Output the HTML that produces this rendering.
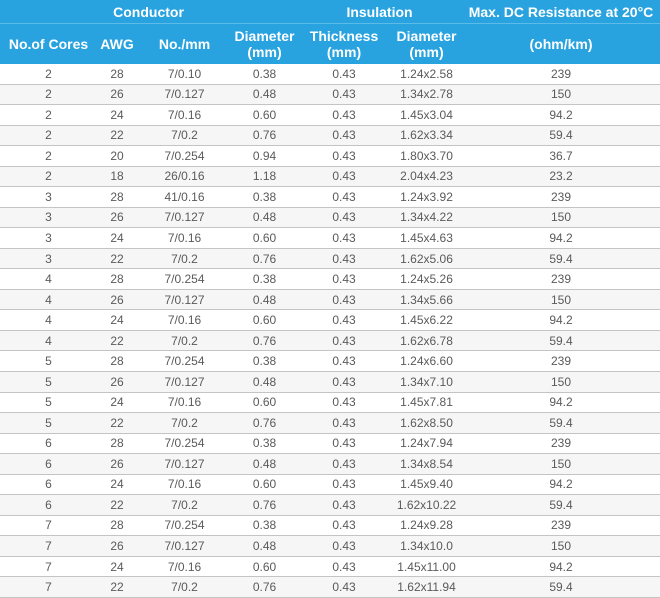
<!DOCTYPE html>
<html><head><meta charset="utf-8"><style>
body{margin:0;background:#fff;}
table{border-collapse:collapse;width:660px;table-layout:fixed;font-family:"Liberation Sans",sans-serif;}
th{background:#29a3e0;color:#fff;font-weight:bold;font-size:14px;padding:0;line-height:16px;}
tr.h1 th{height:23px;border-bottom:1px solid #5cbbe9;}
tr.h2 th{height:40px;}
td{height:19.54px;padding:0;text-align:center;font-size:12px;color:#5a5a5a;border-bottom:1px solid #c4c4c4;}
tbody tr:nth-child(even) td{background:#f6f6f6;}
</style></head><body>
<table>
<colgroup><col style="width:97px"><col style="width:40px"><col style="width:95px"><col style="width:65px"><col style="width:94px"><col style="width:71px"><col style="width:198px"></colgroup>
<thead>
<tr class="h1"><th colspan="4">Conductor</th><th colspan="2">Insulation</th><th>Max. DC Resistance at 20°C</th></tr>
<tr class="h2"><th>No.of Cores</th><th>AWG</th><th>No./mm</th><th>Diameter<br>(mm)</th><th>Thickness<br>(mm)</th><th>Diameter<br>(mm)</th><th>(ohm/km)</th></tr>
</thead>
<tbody>
<tr><td>2</td><td>28</td><td>7/0.10</td><td>0.38</td><td>0.43</td><td>1.24x2.58</td><td>239</td></tr>
<tr><td>2</td><td>26</td><td>7/0.127</td><td>0.48</td><td>0.43</td><td>1.34x2.78</td><td>150</td></tr>
<tr><td>2</td><td>24</td><td>7/0.16</td><td>0.60</td><td>0.43</td><td>1.45x3.04</td><td>94.2</td></tr>
<tr><td>2</td><td>22</td><td>7/0.2</td><td>0.76</td><td>0.43</td><td>1.62x3.34</td><td>59.4</td></tr>
<tr><td>2</td><td>20</td><td>7/0.254</td><td>0.94</td><td>0.43</td><td>1.80x3.70</td><td>36.7</td></tr>
<tr><td>2</td><td>18</td><td>26/0.16</td><td>1.18</td><td>0.43</td><td>2.04x4.23</td><td>23.2</td></tr>
<tr><td>3</td><td>28</td><td>41/0.16</td><td>0.38</td><td>0.43</td><td>1.24x3.92</td><td>239</td></tr>
<tr><td>3</td><td>26</td><td>7/0.127</td><td>0.48</td><td>0.43</td><td>1.34x4.22</td><td>150</td></tr>
<tr><td>3</td><td>24</td><td>7/0.16</td><td>0.60</td><td>0.43</td><td>1.45x4.63</td><td>94.2</td></tr>
<tr><td>3</td><td>22</td><td>7/0.2</td><td>0.76</td><td>0.43</td><td>1.62x5.06</td><td>59.4</td></tr>
<tr><td>4</td><td>28</td><td>7/0.254</td><td>0.38</td><td>0.43</td><td>1.24x5.26</td><td>239</td></tr>
<tr><td>4</td><td>26</td><td>7/0.127</td><td>0.48</td><td>0.43</td><td>1.34x5.66</td><td>150</td></tr>
<tr><td>4</td><td>24</td><td>7/0.16</td><td>0.60</td><td>0.43</td><td>1.45x6.22</td><td>94.2</td></tr>
<tr><td>4</td><td>22</td><td>7/0.2</td><td>0.76</td><td>0.43</td><td>1.62x6.78</td><td>59.4</td></tr>
<tr><td>5</td><td>28</td><td>7/0.254</td><td>0.38</td><td>0.43</td><td>1.24x6.60</td><td>239</td></tr>
<tr><td>5</td><td>26</td><td>7/0.127</td><td>0.48</td><td>0.43</td><td>1.34x7.10</td><td>150</td></tr>
<tr><td>5</td><td>24</td><td>7/0.16</td><td>0.60</td><td>0.43</td><td>1.45x7.81</td><td>94.2</td></tr>
<tr><td>5</td><td>22</td><td>7/0.2</td><td>0.76</td><td>0.43</td><td>1.62x8.50</td><td>59.4</td></tr>
<tr><td>6</td><td>28</td><td>7/0.254</td><td>0.38</td><td>0.43</td><td>1.24x7.94</td><td>239</td></tr>
<tr><td>6</td><td>26</td><td>7/0.127</td><td>0.48</td><td>0.43</td><td>1.34x8.54</td><td>150</td></tr>
<tr><td>6</td><td>24</td><td>7/0.16</td><td>0.60</td><td>0.43</td><td>1.45x9.40</td><td>94.2</td></tr>
<tr><td>6</td><td>22</td><td>7/0.2</td><td>0.76</td><td>0.43</td><td>1.62x10.22</td><td>59.4</td></tr>
<tr><td>7</td><td>28</td><td>7/0.254</td><td>0.38</td><td>0.43</td><td>1.24x9.28</td><td>239</td></tr>
<tr><td>7</td><td>26</td><td>7/0.127</td><td>0.48</td><td>0.43</td><td>1.34x10.0</td><td>150</td></tr>
<tr><td>7</td><td>24</td><td>7/0.16</td><td>0.60</td><td>0.43</td><td>1.45x11.00</td><td>94.2</td></tr>
<tr><td>7</td><td>22</td><td>7/0.2</td><td>0.76</td><td>0.43</td><td>1.62x11.94</td><td>59.4</td></tr>
</tbody></table>
</body></html>
